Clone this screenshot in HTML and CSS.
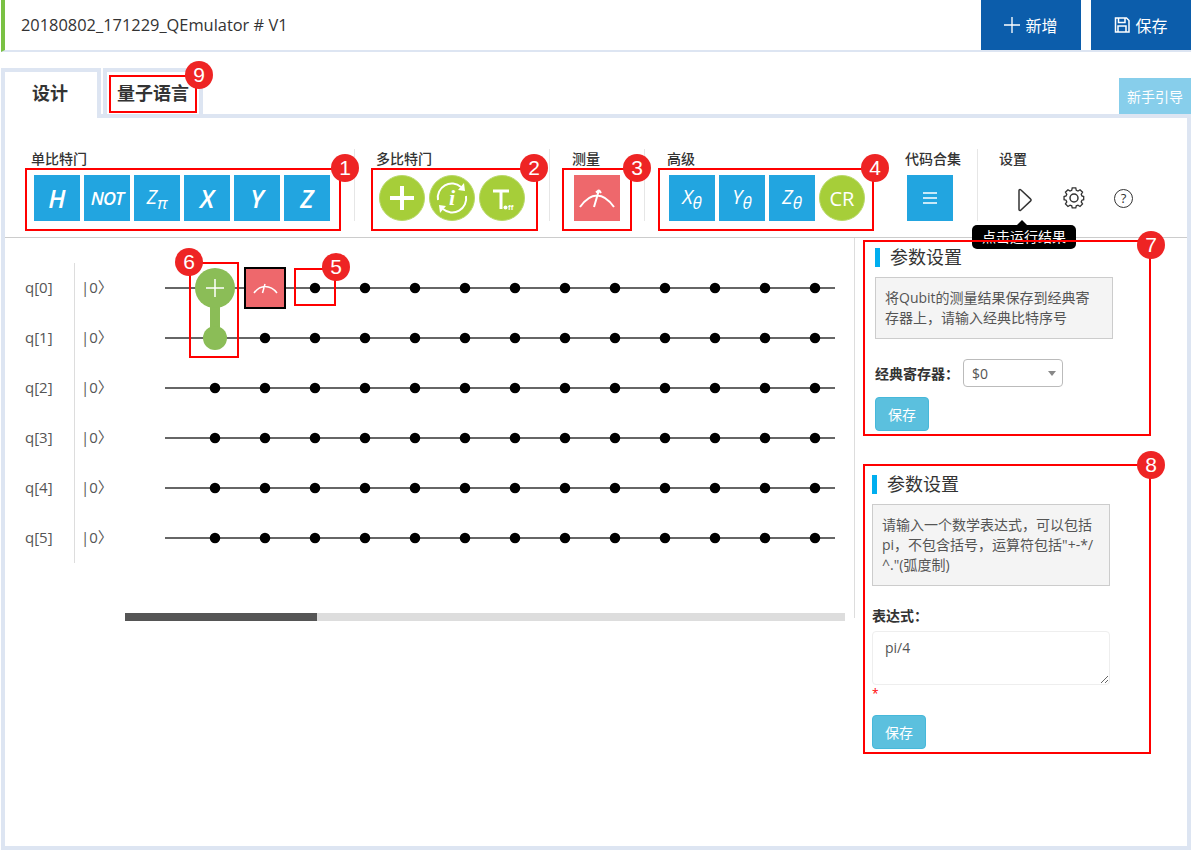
FILE: index.html
```html
<!DOCTYPE html>
<html lang="zh-CN">
<head>
  <meta charset="UTF-8">
  <meta name="viewport" content="width=device-width, initial-scale=1.0">
  <title>QEmulator</title>
  <link rel="stylesheet" href="styles.css">
</head>
<body>
  <header class="topbar">
    <div class="project-name">20180802_171229_QEmulator # V1</div>
    <button class="top-btn" type="button">
      <svg class="top-icon" viewBox="0 0 18 18"><path d="M9 0v18M0 9h18"/></svg>新增
    </button>
    <button class="top-btn" type="button">
      <svg class="top-icon" viewBox="0 0 16 16"><path d="M1.5 1h11l2.500 2.500v11.500h-13.500zM4.500 1v4.500h6.500v-4.500M4 15v-6h8v6"/></svg>保存
    </button>
  </header>

  <nav class="tabs">
    <a class="tab tab-active">设计</a>
    <a class="tab">量子语言</a>
    <button class="guide-btn" type="button">新手引导</button>
  </nav>

  <main class="panel">
    <section class="toolbar">
      <div class="group group-single">
        <h4 class="group-title">单比特门</h4>
        <div class="gates">
          <span class="gate">H</span>
          <span class="gate gate-not">NOT</span>
          <span class="gate gate-small">Z<sub>π</sub></span>
          <span class="gate">X</span>
          <span class="gate">Y</span>
          <span class="gate">Z</span>
        </div>
      </div>
      <div class="group group-multi">
        <h4 class="group-title">多比特门</h4>
        <div class="gates">
          <span class="gate gate-round">
            <svg class="gate-svg" viewBox="0 0 46 46"><path class="stroke-thick" d="M23 11v24M11 23h24"/></svg>
          </span>
          <span class="gate gate-round">
            <svg class="gate-svg" viewBox="0 0 46 46">
              <path class="stroke-thin" d="M9 25a14 14 0 0 1 23-13M37 21a14 14 0 0 1-23 13"/>
              <path class="fill-white" d="M35 8l1 8-7-1zM11 38l-1-8 7 1z"/>
              <text class="gate-i" x="23" y="30">i</text>
            </svg>
          </span>
          <span class="gate gate-round">
            <svg class="gate-svg" viewBox="0 0 46 46">
              <path class="stroke-mid" d="M14 16h16M22 16v18"/>
              <circle class="fill-white" cx="26.500" cy="32.500" r="2"/>
              <text class="gate-off" x="29" y="35">ff</text>
            </svg>
          </span>
        </div>
      </div>
      <div class="group group-measure">
        <h4 class="group-title">测量</h4>
        <div class="gates">
          <span class="gate gate-red">
            <svg class="gate-svg" viewBox="0 0 46 46"><path class="stroke-thin" d="M6 32c5-7 11-11.500 17-11.500s12 4.500 17 11.500M25 15l-5 17M25 15l-3 2.500M25 15l2 3"/></svg>
          </span>
        </div>
      </div>
      <div class="group group-advanced">
        <h4 class="group-title">高级</h4>
        <div class="gates">
          <span class="gate gate-small">X<sub>θ</sub></span>
          <span class="gate gate-small">Y<sub>θ</sub></span>
          <span class="gate gate-small">Z<sub>θ</sub></span>
          <span class="gate gate-round gate-cr">CR</span>
        </div>
      </div>
      <div class="group group-code">
        <h4 class="group-title">代码合集</h4>
        <div class="gates">
          <span class="gate">
            <svg class="gate-svg" viewBox="0 0 46 46"><path class="stroke-menu" d="M16 18h14M16 23h14M16 28h14"/></svg>
          </span>
        </div>
      </div>
      <div class="group group-settings">
        <h4 class="group-title">设置</h4>
        <div class="setting-icons">
          <svg class="setting-icon icon-play" viewBox="0 0 24 24"><path d="M7 1.500c-.5 0-1 .4-1 1v19c0 .6.500 1 1 1 .3 0 .5-.1.700-.3l10-9.300c.5-.4.500-1.400 0-1.800l-10-9.300c-.2-.2-.4-.3-.7-.3z"/></svg>
          <svg class="setting-icon icon-gear" viewBox="0 0 24 24">
            <circle cx="12" cy="12" r="4"/>
            <path d="M10 2h4l.6 2.800 1.900.8 2.400-1.500 2.800 2.800-1.500 2.400.8 1.900 2 .6v3.600l-2 .6-.8 1.900 1.500 2.400-2.800 2.800-2.400-1.500-1.900.8-.6 2.300h-4l-.6-2.300-1.900-.8-2.400 1.500-2.800-2.800 1.500-2.400-.8-1.900-2.300-.6v-3.600l2.300-.6.8-1.900-1.500-2.400 2.800-2.800 2.400 1.500 1.900-.8z" transform="translate(12 12) scale(.88) translate(-12 -13.500)"/>
          </svg>
          <span class="help-icon">?</span>
        </div>
      </div>
    </section>

    <section class="workspace">
      <div class="circuit">
        <div class="circuit-rows">
          <div class="qubits">
            <div class="qubit">q[0]</div>
            <div class="qubit">q[1]</div>
            <div class="qubit">q[2]</div>
            <div class="qubit">q[3]</div>
            <div class="qubit">q[4]</div>
            <div class="qubit">q[5]</div>
          </div>
          <div class="kets">
            <div class="ket">|0〉</div>
            <div class="ket">|0〉</div>
            <div class="ket">|0〉</div>
            <div class="ket">|0〉</div>
            <div class="ket">|0〉</div>
            <div class="ket">|0〉</div>
          </div>
          <svg class="wires" viewBox="0 0 720 300">
            <path class="wire" d="M40 25h670M40 75h670M40 125h670M40 175h670M40 225h670M40 275h670"/>
            <path class="dots" d="M190 25h510"/>
            <path class="dots" d="M140 75h560"/>
            <path class="dots" d="M90 125h610"/>
            <path class="dots" d="M90 175h610"/>
            <path class="dots" d="M90 225h610"/>
            <path class="dots" d="M90 275h610"/>
            <path class="cnot-stem" d="M90 25v50"/>
            <circle class="cnot" cx="90" cy="25" r="20"/>
            <circle class="cnot" cx="90" cy="75" r="12"/>
            <path class="cnot-plus" d="M81 25h18M90 16v18"/>
            <rect class="placed-measure" x="120" y="5" width="40" height="40"/>
            <path class="placed-arc" d="M129 30c3-4 7-6.500 11-6.500s9 2.500 12 6.500M137.500 30l2.500-9"/>
          </svg>
        </div>
        <div class="scrollbar"><div class="scroll-thumb"></div></div>
      </div>

      <aside class="sidebar">
        <div class="params params-first">
          <h3 class="params-title">参数设置</h3>
          <p class="params-note">将Qubit的测量结果保存到经典寄<br>存器上，请输入经典比特序号</p>
          <div class="field-row">
            <label class="field-label" for="creg">经典寄存器：</label>
            <div class="select-wrap">
              <select class="field-select" id="creg"><option>$0</option><option>$1</option></select>
            </div>
          </div>
          <button class="save-btn" type="button">保存</button>
        </div>
        <div class="params params-second">
          <h3 class="params-title">参数设置</h3>
          <p class="params-note">请输入一个数学表达式，可以包括pi，不包含括号，运算符包括"+-*/<br>^."(弧度制)</p>
          <label class="field-label field-label-block" for="expr">表达式：</label>
          <textarea class="field-text" id="expr">pi/4</textarea>
          <div class="required">*</div>
          <button class="save-btn" type="button">保存</button>
        </div>
      </aside>
    </section>
  </main>

  <div class="tooltip">点击运行结果</div>

  <div class="mark mark-1"><b class="badge">1</b></div>
  <div class="mark mark-2"><b class="badge">2</b></div>
  <div class="mark mark-3"><b class="badge">3</b></div>
  <div class="mark mark-4"><b class="badge">4</b></div>
  <div class="mark mark-5"><b class="badge">5</b></div>
  <div class="mark mark-6"><b class="badge">6</b></div>
  <div class="mark mark-7"><b class="badge">7</b></div>
  <div class="mark mark-8"><b class="badge">8</b></div>
  <div class="mark mark-9"><b class="badge">9</b></div>
</body>
</html>
```

FILE: styles.css
```css
* {
  box-sizing: border-box;
}
html, body {
  height: 100%;
}
body {
  position: relative;
  margin: 0;
  padding: 0 1px;
  display: flex;
  flex-direction: column;
  background-color: #fff;
  color: #333;
  font-family: "Open Sans", "Noto Sans CJK SC", sans-serif;
  font-size: 14px;
  overflow: hidden;
}

/* header */
.topbar {
  display: flex;
  flex: none;
  height: 52px;
  padding-bottom: 2px;
  border-bottom: 2px solid #dde5f2;
  border-left: 4px solid #7ac143;
}
.project-name {
  flex: 1;
  padding-left: 16px;
  font-size: 16.400px;
  line-height: 50px;
}
.top-btn {
  display: flex;
  align-items: center;
  justify-content: center;
  gap: 5px;
  width: 100px;
  height: 50px;
  margin-left: 10px;
  border: none;
  background-color: #0c5dab;
  color: #fff;
  font-family: inherit;
  font-size: 16px;
}
.top-icon {
  width: 16px;
  height: 16px;
  fill: none;
  stroke: #fff;
  stroke-width: 1.500;
}

/* tabs */
.tabs {
  display: flex;
  flex: none;
  align-items: flex-end;
  height: 62px;
  padding-top: 16px;
}
.tab {
  width: 100px;
  height: 46px;
  margin-right: 2px;
  padding-top: 8px;
  border: 4px solid #dde5f2;
  border-bottom: none;
  font-size: 18px;
  font-weight: 700;
  line-height: 26px;
  text-align: center;
}
.tab-active {
  position: relative;
  z-index: 1;
  height: 50px;
  margin-bottom: -4px;
  padding-right: 2px;
  background-color: #fff;
}
.guide-btn {
  width: 72px;
  height: 36px;
  margin-left: auto;
  padding: 0;
  border: none;
  background-color: #87ceeb;
  color: #fff;
  font-family: inherit;
  font-size: 14px;
}

/* main panel */
.panel {
  flex: 1;
  border: 4px solid #dde5f2;
}
.toolbar {
  display: flex;
  height: 120px;
  padding-top: 31px;
  border-bottom: 1px solid #ccc;
}
.group {
  flex: none;
  height: 72px;
  border-right: 1px solid #e6e6e6;
}
.group-title {
  margin: 0 0 6px;
  font-size: 14px;
  font-weight: 500;
  line-height: 20px;
}
.gates {
  display: flex;
  gap: 4px;
  padding-left: 2px;
}
.group-single {
  width: 350px;
  padding-left: 26px;
}
.group-multi {
  width: 195px;
  padding-left: 21px;
}
.group-single .gates,
.group-multi .gates {
  padding-left: 3px;
}
.group-measure {
  width: 95px;
  padding-left: 22px;
}
.group-advanced {
  width: 240px;
  padding-left: 22px;
  border-right: none;
}
.group-code {
  width: 93px;
  padding-left: 20px;
}
.group-settings {
  padding-left: 21px;
  border-right: none;
}

.gate {
  display: flex;
  align-items: center;
  justify-content: center;
  width: 46px;
  height: 46px;
  background-color: #22a5e0;
  color: #fff;
  font-size: 25px;
  font-style: italic;
  font-weight: 600;
}
.gate-not {
  font-size: 18px;
  letter-spacing: -1px;
}
.gate-small {
  padding-bottom: 3px;
  font-size: 20px;
  font-weight: 400;
}
.gate-small sub {
  margin-top: 11px;
  font-size: 17px;
  line-height: 1;
}
.gate-round {
  border: 1px solid #b9d96a;
  border-radius: 50%;
  background-color: #a6ce39;
}
.gate-cr {
  font-size: 20px;
  font-style: normal;
  font-weight: 400;
}
.gate-red {
  background-color: #ee686c;
}
.gate-svg {
  width: 46px;
  height: 46px;
  flex: none;
  fill: none;
  stroke: #fff;
}
.stroke-thick {
  stroke-width: 4;
}
.stroke-mid {
  stroke-width: 3;
}
.stroke-thin {
  stroke-width: 2;
}
.stroke-menu {
  stroke-width: 1.500;
}
.fill-white {
  fill: #fff;
  stroke: none;
}
.gate-i {
  fill: #fff;
  stroke: none;
  font-family: "Liberation Serif", serif;
  font-size: 22px;
  font-style: italic;
  font-weight: 700;
  text-anchor: middle;
}
.gate-off {
  fill: #fff;
  stroke: none;
  font-family: "Liberation Sans", sans-serif;
  font-size: 8px;
  font-style: normal;
  font-weight: 700;
}
.setting-icons {
  display: flex;
  align-items: center;
  height: 46px;
  padding-left: 14px;
}
.setting-icon {
  flex: none;
  width: 24px;
  height: 24px;
  fill: none;
  stroke: #333;
  stroke-width: 1.500;
}
.icon-play {
  margin-top: 4px;
}
.icon-gear {
  margin-left: 25px;
}
.help-icon {
  width: 19px;
  height: 19px;
  margin-left: 28px;
  border: 1.500px solid #333;
  border-radius: 50%;
  font-size: 13px;
  line-height: 16px;
  text-align: center;
}

/* circuit */
.workspace {
  display: flex;
}
.circuit {
  flex: none;
  width: 850px;
  height: 380px;
  padding-top: 25px;
  border-right: 1px solid #ddd;
}
.circuit-rows {
  display: flex;
}
.qubits {
  width: 70px;
  padding-left: 20px;
  border-right: 1px solid #ddd;
}
.qubit, .ket {
  height: 50px;
  color: #555;
  font-size: 15px;
  line-height: 48px;
}
.kets {
  width: 50px;
  padding-left: 6px;
}
.wires {
  flex: none;
  width: 720px;
  height: 300px;
}
.wire {
  fill: none;
  stroke: #666;
  stroke-width: 2;
}
.dots {
  fill: none;
  stroke: #000;
  stroke-width: 10.500;
  stroke-linecap: round;
  stroke-dasharray: 0 50;
}
.cnot {
  fill: #8bbd57;
}
.cnot-stem {
  stroke: #8bbd57;
  stroke-width: 10;
}
.cnot-plus {
  stroke: #fff;
  stroke-width: 1.500;
}
.placed-measure {
  fill: #ee686c;
  stroke: #000;
  stroke-width: 2;
}
.placed-arc {
  fill: none;
  stroke: #fff;
  stroke-width: 1.500;
}
.scrollbar {
  height: 8px;
  margin: 50px 9px 0 120px;
  background-color: #ddd;
}
.scroll-thumb {
  width: 192px;
  height: 8px;
  background-color: #555;
}

/* parameter panels */
.sidebar {
  flex: 1;
}
.params {
  width: 238px;
}
.params-first {
  margin: 10px 0 0 20px;
}
.params-second {
  margin: 44px 0 0 17px;
}
.params-title {
  height: 19px;
  margin: 0 0 10px;
  padding-left: 10px;
  border-left: 5px solid #00aeef;
  font-size: 18px;
  font-weight: 400;
  line-height: 19px;
}
.params-note {
  margin: 0 0 20px;
  padding: 10px 8px 10px 9px;
  border: 1px solid #ccc;
  background-color: #f4f4f4;
  color: #555;
  line-height: 20px;
}
.field-row {
  display: flex;
  align-items: center;
  gap: 4px;
  height: 28px;
  margin-bottom: 10px;
}
.field-label {
  font-size: 14px;
  font-weight: 700;
}
.field-label-block {
  display: block;
  height: 20px;
  margin: 20px 0 5px;
  line-height: 20px;
}
.select-wrap {
  position: relative;
  width: 100px;
}
.select-wrap::after {
  content: "";
  position: absolute;
  top: 12px;
  right: 7px;
  border-top: 5px solid #888;
  border-left: 4px solid transparent;
  border-right: 4px solid transparent;
}
.field-select {
  width: 100%;
  height: 28px;
  padding-left: 8px;
  border: 1px solid #bbb;
  border-radius: 4px;
  appearance: none;
  background-color: #fff;
  color: #555;
  font-family: inherit;
  font-size: 14px;
}
.field-text {
  display: block;
  width: 100%;
  height: 54px;
  padding: 6px 12px;
  border: 1px solid #eee;
  border-radius: 4px;
  outline: none;
  color: #555;
  font-family: inherit;
  font-size: 14px;
}
.required {
  height: 30px;
  color: #f00;
  font-size: 12px;
  line-height: 18px;
}
.save-btn {
  display: block;
  width: 54px;
  height: 34px;
  padding: 0;
  border: 1px solid #46b8da;
  border-radius: 4px;
  background-color: #5bc0de;
  color: #fff;
  font-family: inherit;
  font-size: 14px;
}

/* run tooltip */
.tooltip {
  position: absolute;
  top: 225px;
  left: 972px;
  width: 104px;
  height: 24px;
  border-radius: 5px;
  background-color: #000;
  color: #fff;
  line-height: 24px;
  text-align: center;
}
.tooltip::before {
  content: "";
  position: absolute;
  top: -5px;
  left: 45px;
  border-bottom: 5px solid #000;
  border-left: 5px solid transparent;
  border-right: 5px solid transparent;
}

/* red callouts */
.mark {
  position: absolute;
  border: 2px solid #f00;
}
.badge {
  position: absolute;
  top: -16px;
  right: -16px;
  width: 28px;
  height: 28px;
  border-radius: 50%;
  background-color: #ee2424;
  color: #fff;
  font-family: "Liberation Sans", sans-serif;
  font-size: 21px;
  font-weight: 400;
  line-height: 28px;
  text-align: center;
}
.mark-1 { top: 168px; left: 25px; width: 316px; height: 63px; }
.mark-2 { top: 168px; left: 371px; width: 167px; height: 63px; }
.mark-3 { top: 168px; left: 562px; width: 70px; height: 63px; }
.mark-4 { top: 168px; left: 658px; width: 216px; height: 63px; }
.mark-5 { top: 268px; left: 294px; width: 42px; height: 38px; }
.mark-6 { top: 262px; left: 189px; width: 50px; height: 96px; }
.mark-7 { top: 240px; left: 863px; width: 288px; height: 196px; }
.mark-8 { top: 464px; left: 863px; width: 288px; height: 290px; }
.mark-9 { top: 75px; left: 109px; width: 88px; height: 38px; }
.mark-1 .badge { right: -20px; }
.mark-2 .badge { right: -12px; }
.mark-3 .badge { right: -21px; }
.mark-4 .badge { right: -17px; }
.mark-5 .badge { top: -17px; }
.mark-6 .badge { right: auto; left: -16px; }
.mark-7 .badge { top: -11px; }
.mark-8 .badge { top: -15px; }
.mark-9 .badge { right: -18px; }
```
